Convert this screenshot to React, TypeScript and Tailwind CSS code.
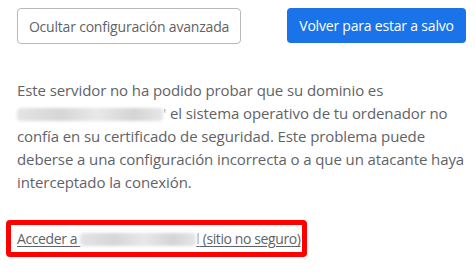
import React from 'react';

const Blur = ({ w }: { w: number }) => (
  <span
    className="inline-block h-[13px] align-[-2px] rounded-sm bg-[linear-gradient(90deg,#e4e4e4,#d6d6d6_30%,#e8e8e8_55%,#d4d4d4_80%,#e6e6e6)] blur-[1.5px]"
    style={{ width: w }}
  />
);

const App = () => {
  return (
    <div className="w-[475px] h-[280px] bg-white font-['Open_Sans',sans-serif] text-[#5f6368] pl-[17px] pr-[9px] pt-[8px] overflow-hidden">
      <div className="flex justify-between">
        <button className="w-[224px] h-[36px] border border-[#b9b9b9] rounded-[4px] text-[14px] text-[#5f6368] tracking-[-0.2px]">
          Ocultar configuración avanzada
        </button>
        <button className="w-[179px] h-[35px] rounded-[4px] bg-[#1a73e8] text-[14px] text-white tracking-[-0.2px]">
          Volver para estar a salvo
        </button>
      </div>

      <p className="mt-[35px] text-[15px] leading-[23px] tracking-[-0.1px] w-[449px]">
        Este servidor no ha podido probar que su dominio es <Blur w={146} />
        <span className="text-[#aaa]">'</span> el sistema operativo de tu ordenador no confía en su
        certificado de seguridad. Este problema puede deberse a una configuración incorrecta o a
        que un atacante haya interceptado la conexión.
      </p>

      <div className="mt-[26px] -ml-[11px] w-[301px] h-[37px] border-[5px] border-[#ff0000] rounded-[4px] flex items-center pl-[6px]">
        <a className="text-[14px] underline underline-offset-2 text-[#5f6368] tracking-[-0.4px] whitespace-nowrap">
          Acceder a <Blur w={116} />
          <span className="text-[#aaa]">l</span> (sitio no seguro)
        </a>
      </div>
    </div>
  );
};

export default App;
